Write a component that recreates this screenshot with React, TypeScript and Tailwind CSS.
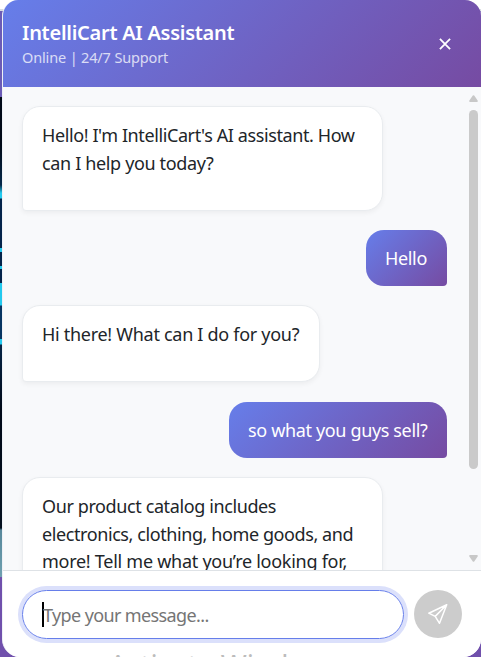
import type { ReactNode } from 'react';

type Line = { text: string; className: string };

function BotMessage({ lines, className }: { lines: Line[]; className: string }) {
  return (
    <div
      className={`shrink-0 self-start rounded-[18px] rounded-bl-[4px] border border-[#e9ecef] bg-white px-[19px] pt-[15px] text-[#212529] shadow-[0_2px_5px_rgba(0,0,0,0.05)] ${className}`}
    >
      {lines.map((line) => (
        <div key={line.text} className={`h-[27.6px] whitespace-nowrap leading-[27.6px] ${line.className}`}>
          {line.text}
        </div>
      ))}
    </div>
  );
}

function UserMessage({ children, className }: { children: ReactNode; className: string }) {
  return (
    <div
      className={`h-14 shrink-0 self-end whitespace-nowrap rounded-[18px] rounded-br-[4px] bg-[linear-gradient(135deg,#667eea_0%,#764ba2_100%)] pl-[19px] pt-[15px] text-white ${className}`}
    >
      {children}
    </div>
  );
}

function Scrollbar() {
  return (
    <div className="flex w-[15px] shrink-0 flex-col items-center pt-2 pb-2">
      <svg width="9" height="7" viewBox="0 0 9 7" fill="#c8c8c8">
        <path d="M3.8.6Q4.5-.2 5.2.6L8.8 5.7Q9 7 8 7H1Q0 7 .2 5.7Z" />
      </svg>
      <div className="mt-2 h-[359px] w-[9px] rounded-full bg-[#cacaca]" />
      <svg className="mt-auto" width="9" height="7" viewBox="0 0 9 7" fill="#c8c8c8">
        <path d="M3.8 6.4Q4.5 7.2 5.2 6.4L8.8 1.3Q9 0 8 0H1Q0 0 .2 1.3Z" />
      </svg>
    </div>
  );
}

export default function App() {
  return (
    <div className="relative h-[657px] w-[481px] overflow-hidden bg-[linear-gradient(180deg,#fff_0,#fff_9px,#d8dde2_9px,#d8dde2_11px,#6b5bb5_11px,#6b5bb5_97px,#020a18_97px,#020a18_145px,#05284a_185px,#22c9ee_193px,#22c9ee_198px,#04244a_199px,#04244a_248px,#22c9ee_248px,#22c9ee_252px,#04244a_252px,#04244a_266px,#22c9ee_266px,#22c9ee_269px,#04244a_269px,#04244a_283px,#22c9ee_283px,#22c9ee_305px,#073562_306px,#073562_339px,#22c9ee_339px,#22c9ee_344px,#052446_345px,#020a18_410px,#04101f_528px,#57879b_530px,#6fa0b0_577px,#7050ac_577px,#7050ac_100%)] pl-[2px] font-['Noto_Sans','Open_Sans',sans-serif] text-[18px] leading-[27.75px]">
      <div className="flex h-full flex-col overflow-hidden rounded-[16px] rounded-b-[18px] border-l border-[#eef1f6] bg-white">
        <header className="flex h-[87px] shrink-0 items-center justify-between bg-[linear-gradient(135deg,#667eea_0%,#764ba2_100%)] pr-[30px] pl-[19px] text-white">
          <div className="pt-[2px]">
            <h1 className="h-[25px] whitespace-nowrap text-[20px] leading-[26px] font-semibold tracking-[-0.27px]">
              IntelliCart AI Assistant
            </h1>
            <p className="whitespace-nowrap text-[14.5px] leading-6 tracking-[-0.15px] opacity-75">
              Online | 24/7 Support
            </p>
          </div>
          <button aria-label="Close" className="flex size-[12px] items-center justify-center">
            <svg width="12" height="12" viewBox="0 0 12 12" fill="none" stroke="#fff" strokeWidth="1.8">
              <path d="M.9.9 11.1 11.1M11.1.9.9 11.1" />
            </svg>
          </button>
        </header>

        <main className="flex h-[483px] shrink-0 bg-[#f8f9fb]">
          <div className="flex min-w-0 flex-1 flex-col gap-[19px] overflow-hidden pt-[19px] pr-[19px] pl-[19px]">
            <BotMessage
              className="h-[105px] w-[361px]"
              lines={[
                { text: "Hello! I'm IntelliCart's AI assistant. How", className: 'tracking-[-0.4px]' },
                { text: 'can I help you today?', className: 'tracking-[-0.35px]' },
              ]}
            />
            <UserMessage className="w-[81px] tracking-[-0.35px]">Hello</UserMessage>
            <BotMessage
              className="h-[77px] w-[298px]"
              lines={[{ text: 'Hi there! What can I do for you?', className: 'tracking-[-0.29px]' }]}
            />
            <UserMessage className="mt-[1px] w-[218px] tracking-[-0.35px]">so what you guys sell?</UserMessage>
            <BotMessage
              className="h-[133px] w-[361px]"
              lines={[
                { text: 'Our product catalog includes', className: 'tracking-[-0.39px]' },
                { text: 'electronics, clothing, home goods, and', className: 'tracking-[-0.41px]' },
                { text: 'more! Tell me what you’re looking for,', className: 'tracking-[-0.27px]' },
              ]}
            />
          </div>
          <Scrollbar />
        </main>

        <footer className="flex flex-1 gap-[10px] border-t border-[#dee2e6] bg-white pt-[19px] pl-[19px]">
          <div className="flex h-[49px] w-[382px] items-center rounded-full border border-[#667eea] pl-[19px] shadow-[0_0_0_4px_#dbe0fb]">
            <span className="h-[25px] w-[2px] bg-black" />
            <span className="-ml-[1px] whitespace-nowrap pt-[3px] tracking-[-0.62px] text-[#757575]">
              Type your message...
            </span>
          </div>
          <button aria-label="Send" className="flex size-12 items-center justify-center rounded-full bg-[#cccccc]">
            <svg width="20" height="20" viewBox="0 0 20 20" fill="none" stroke="#fff" strokeWidth="1.5" strokeLinejoin="round">
              <path d="M18.7.8.8 9.2 7.2 12.4 11.5 19.3Z M18.7.8 7.2 12.4 M18.7.8 11.5 19.3" />
            </svg>
          </button>
        </footer>
      </div>
      <div className="absolute top-[645px] left-[109px] whitespace-nowrap text-[28px] leading-[38px] text-[#bcbcbc]">
        Activate Windows
      </div>
    </div>
  );
}
